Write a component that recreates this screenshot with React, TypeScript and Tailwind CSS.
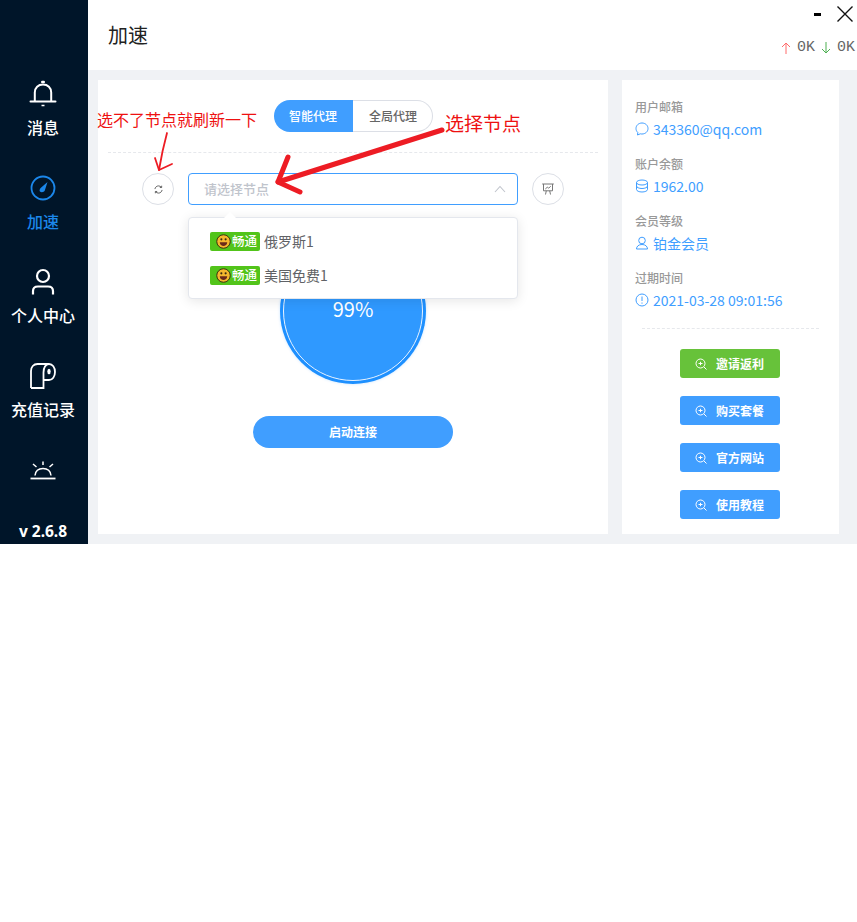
import React from "react";

const FONT = '"Noto Sans CJK SC", "Noto Sans", sans-serif';

const Bell = () => (
  <svg width="28" height="28" viewBox="0 0 28 28" fill="none" stroke="#fff" strokeWidth="2">
    <path d="M5.800 21V12.500c0-4.800 3.400-8 8.200-8s8.200 3.200 8.200 8V21" />
    <path d="M1.500 21.500h25" strokeLinecap="round" />
    <path d="M13.200 2h1.600" strokeWidth="2.400" strokeLinecap="round" />
    <path d="M12.500 25.500h3" strokeWidth="1.500" />
  </svg>
);
const Gauge = () => (
  <svg width="26" height="26" viewBox="0 0 26 26" fill="none">
    <circle cx="13" cy="13" r="11.500" stroke="#1b87ea" strokeWidth="1.800" />
    <path d="M17.500 7 L14.800 15.500 C14 17.300 11 17.800 9.700 16.200 C9.300 14.800 10 13.500 11.200 12.500 Z" fill="#1b87ea" />
  </svg>
);
const Person = () => (
  <svg width="24" height="28" viewBox="0 0 24 28" fill="none" stroke="#fff" strokeWidth="2.200">
    <circle cx="12" cy="8" r="6" />
    <path d="M2 26.500V23c0-3 2-4.500 5-4.500h10c3 0 5 1.500 5 4.500v3.500" />
  </svg>
);
const Roll = () => (
  <svg width="26" height="26" viewBox="0 0 26 26" fill="none" stroke="#fff" strokeWidth="1.800">
    <path d="M1 25V8c0-4 2.500-7 6.500-7H19c3.500 0 6 3.500 6 8s-2.500 8-6 8h-5.500" />
    <path d="M1 25h12.500V9.500C13.500 5 15.500 1 19 1" />
    <ellipse cx="19" cy="8.500" rx="1.700" ry="2.700" fill="#fff" stroke="none" />
  </svg>
);
const Sunrise = () => (
  <svg width="26" height="20" viewBox="0 0 26 20" fill="none" stroke="#fff" strokeWidth="1.500">
    <path d="M.5 18.500h25" strokeWidth="1.800" />
    <path d="M5 15.500C5.500 11 8.500 8.500 13 8.500s7.500 2.500 8 7" />
    <path d="M13 1.500v3.500M3 4l3.500 3M23 4l-3.500 3" />
  </svg>
);

const Refresh = () => (
  <svg width="9" height="9" viewBox="0 0 10 10" fill="none" stroke="#555" strokeWidth="1">
    <path d="M1 4.500C1.300 2.500 3 1 5 1c1.300 0 2.400.6 3.100 1.500M9 5.500C8.700 7.500 7 9 5 9c-1.300 0-2.400-.6-3.100-1.500" />
    <path d="M8.500 .8v2H6.500M1.500 9.200v-2h2" />
  </svg>
);
const Board = () => (
  <svg width="12" height="12" viewBox="0 0 12 12" fill="none" stroke="#777" strokeWidth="1">
    <path d="M.2 1h11.600M1.500 1v6.800h9V1" />
    <path d="M3.300 6l2-1.800 1.400 1 2-2" />
    <path d="M3.500 11.500l.8-3.700M8.500 11.500l-.8-3.700" />
  </svg>
);
const Chevron = () => (
  <svg width="12" height="8" viewBox="0 0 12 8" fill="none" stroke="#c0c4cc" strokeWidth="1.100">
    <path d="M1 7l5-5.500L11 7" />
  </svg>
);
const Smile = () => (
  <svg width="15" height="15" viewBox="0 0 14 14" className="shrink-0">
    <circle cx="7" cy="7" r="6.300" fill="#f5b82e" stroke="#3a2a10" strokeWidth="0.900" />
    <circle cx="5" cy="5" r="1" fill="#3a2a10" />
    <circle cx="9" cy="5" r="1" fill="#3a2a10" />
    <path d="M3.500 7.700h7C10.300 10 8.800 11.300 7 11.300S3.700 10 3.500 7.700z" fill="#6b2a1a" />
  </svg>
);

const Chat = () => (
  <svg width="14" height="14" viewBox="0 0 14 14" fill="none" stroke="#409eff" strokeWidth="1">
    <path d="M7 1c3.300 0 6 2.300 6 5.500S10.300 12 7 12c-.6 0-1.200 0-1.700-.2L2.500 13l.3-2.500C1.600 9.400 1 8 1 6.500 1 3.300 3.700 1 7 1z" />
  </svg>
);
const Coins = () => (
  <svg width="14" height="14" viewBox="0 0 14 14" fill="none" stroke="#409eff" strokeWidth="1">
    <ellipse cx="7" cy="3.500" rx="5.500" ry="2.500" />
    <path d="M1.500 3.500v7c0 1.400 2.500 2.500 5.500 2.500s5.500-1.100 5.500-2.500v-7M1.500 7c0 1.400 2.500 2.500 5.500 2.500s5.500-1.100 5.500-2.500" />
  </svg>
);
const User = () => (
  <svg width="14" height="14" viewBox="0 0 14 14" fill="none" stroke="#409eff" strokeWidth="1">
    <circle cx="7" cy="4.500" r="3.300" />
    <path d="M1.500 13c0-2.700 2.200-4.500 5.500-4.500s5.500 1.800 5.500 4.500z" />
  </svg>
);
const Clock = () => (
  <svg width="14" height="14" viewBox="0 0 14 14" fill="none" stroke="#409eff" strokeWidth="1">
    <circle cx="7" cy="7" r="6" />
    <path d="M7 3.500v4.500M7 9.500v1.200" />
  </svg>
);
const Zoom = () => (
  <svg width="12" height="12" viewBox="0 0 12 12" fill="none" stroke="#fff" strokeWidth="1">
    <circle cx="5.500" cy="5.500" r="4.500" />
    <path d="M9 9l2.500 2.500M3.500 5.500h4M5.500 3.800v3.400" />
  </svg>
);

const NavItem = ({ icon, label, active }: { icon: React.ReactNode; label: string; active?: boolean }) => (
  <div className={`flex h-[94px] flex-col items-center ${active ? "text-[#1b87ea]" : "text-white"}`}>
    <div className="flex h-[28px] items-center justify-center">{icon}</div>
    <div className="mt-[7px] text-[16px] leading-[24px] font-medium">{label}</div>
  </div>
);

const Info = ({ label, icon, value }: { label: string; icon: React.ReactNode; value: string }) => (
  <div className="h-[57px]">
    <div className="text-[12px] leading-[18px] text-[#999] font-medium">{label}</div>
    <div className="mt-[2px] flex h-[22px] items-center gap-[4px] text-[14px] text-[#409eff]">
      {icon}
      <span>{value}</span>
    </div>
  </div>
);

const Action = ({ label, green }: { label: string; green?: boolean }) => (
  <button className={`flex h-[29px] w-[100px] items-center justify-center gap-[9px] rounded-[3px] text-[12px] font-bold text-white ${green ? "bg-[#67c23a]" : "bg-[#409eff]"}`}>
    <Zoom />
    <span>{label}</span>
  </button>
);

const Option = ({ label }: { label: string }) => (
  <div className="flex h-[34px] items-center gap-[4px] pl-[21px] text-[14px] text-[#606266]">
    <span className="flex h-[19px] w-[50px] items-center gap-[1px] rounded-[2px] bg-[#52c41a] pl-[6px] text-[12.500px] font-medium text-white">
      <Smile />
      <span>畅通</span>
    </span>
    <span>{label}</span>
  </div>
);

export default function App() {
  return (
    <div className="relative flex h-[544px] w-[857px] overflow-hidden bg-white" style={{ fontFamily: FONT }}>
      <aside className="flex h-full w-[88px] shrink-0 flex-col bg-[#001529] pt-[80px] pr-[2px]">
        <NavItem icon={<Bell />} label="消息" />
        <NavItem icon={<Gauge />} label="加速" active />
        <NavItem icon={<Person />} label="个人中心" />
        <NavItem icon={<Roll />} label="充值记录" />
        <div className="flex h-[28px] items-center justify-center"><Sunrise /></div>
        <div className="mt-auto mb-[1px] text-center text-[15.500px] leading-[24px] font-bold text-white" style={{ fontFamily: '"Noto Sans", sans-serif' }}>v 2.6.8</div>
      </aside>

      <main className="flex min-w-0 flex-1 flex-col">
        <header className="relative flex h-[70px] shrink-0 items-center pl-[20px] text-[20px] text-[#222]">
          <span>加速</span>
          <div className="absolute top-[5px] right-[3px] flex items-center gap-[15px]">
            <span className="h-[3px] w-[7px] bg-black" />
            <svg width="18" height="18" viewBox="0 0 18 18" fill="none" stroke="#111" strokeWidth="1.400">
              <path d="M1.500 1.500l15 15M16.500 1.500l-15 15" />
            </svg>
          </div>
          <div className="absolute top-[39px] right-[2px] flex items-center gap-[6px] text-[15px] leading-[18px] text-[#666]" style={{ fontFamily: '"Liberation Mono", monospace' }}>
            <svg width="10" height="12" viewBox="0 0 10 12" fill="none" stroke="#ff6b6b" strokeWidth="1"><path d="M5 12V1M1 5l4-4 4 4" /></svg>
            <span>0K</span>
            <svg width="10" height="12" viewBox="0 0 10 12" fill="none" stroke="#4caf50" strokeWidth="1"><path d="M5 0v11M1 7l4 4 4-4" /></svg>
            <span>0K</span>
          </div>
        </header>

        <div className="flex min-h-0 flex-1 gap-[14px] bg-[#f0f2f5] py-[10px] pl-[10px] pr-[18px]">
          <section className="relative flex w-[510px] flex-col items-center bg-white pt-[20px]">
            <div className="flex h-[32px] text-[12px] font-medium">
              <div className="flex w-[79px] items-center justify-center rounded-l-[16px] bg-[#409eff] text-white">智能代理</div>
              <div className="flex w-[80px] items-center justify-center rounded-r-[16px] border border-l-0 border-[#dcdfe6] pl-[2px] text-[#666]">全局代理</div>
            </div>
            <div className="mt-[20px] w-[490px] border-t border-dashed border-[#e6e8ec]" />
            <div className="mt-[20px] flex items-center gap-[14px]">
              <div className="flex h-[32px] w-[32px] items-center justify-center rounded-full border border-[#dcdfe6]"><Refresh /></div>
              <div className="flex h-[32px] w-[330px] items-center justify-between rounded-[4px] border border-[#409eff] pl-[15px] pr-[11px] text-[13px] font-medium text-[#c0c4cc]">
                <span>请选择节点</span>
                <Chevron />
              </div>
              <div className="flex h-[32px] w-[32px] items-center justify-center rounded-full border border-[#dcdfe6]"><Board /></div>
            </div>

            <div className="mt-[33px] flex h-[146px] w-[146px] items-center justify-center rounded-full bg-[#1e90ff] shadow-[0_0_3px_rgba(30,144,255,0.25)]">
              <div className="flex h-[140px] w-[140px] items-center justify-center rounded-full border-[1.500px] border-[#e8f3ff] bg-[#2f99ff] text-[20px] leading-none text-white">
                <span className="relative -top-[2px]">99%</span>
              </div>
            </div>

            <button className="mt-[32px] h-[32px] w-[200px] rounded-[16px] bg-[#409eff] text-[12px] font-bold text-white">启动连接</button>

            {/* dropdown */}
            <div className="absolute top-[137px] left-[90px] w-[330px] rounded-[4px] border border-[#e4e7ed] bg-white py-[6px] shadow-[0_2px_12px_rgba(0,0,0,0.1)]">
              <span className="absolute -top-[6px] left-[35px] h-0 w-0 border-x-[6px] border-b-[6px] border-x-transparent border-b-white" />
              <Option label="俄罗斯1" />
              <Option label="美国免费1" />
            </div>

            {/* red annotations */}
            <div className="absolute top-[28px] -left-[1px] whitespace-nowrap text-[16px] leading-[22px] text-[#ee1111]">选不了节点就刷新一下</div>
            <div className="absolute top-[30px] left-[347px] whitespace-nowrap text-[19px] leading-[26px] text-[#ee1111]">选择节点</div>
            <svg className="pointer-events-none absolute top-[40px] left-0 overflow-visible" width="510" height="80" viewBox="0 0 510 80" fill="none" stroke="#ed1c24" strokeLinecap="round" strokeLinejoin="round">
              <path d="M344 10 L180 62" strokeWidth="5" />
              <path d="M190 37 L180 62 L202 72" strokeWidth="5" />
              <path d="M69 13 C66 24 63 38 61 50" strokeWidth="1.800" />
              <path d="M57 38 L61 50 L74 44" strokeWidth="1.800" />
            </svg>
          </section>

          <section className="flex w-[217px] flex-col bg-white pt-[18px]">
            <div className="pl-[13px]">
              <Info label="用户邮箱" icon={<Chat />} value="343360@qq.com" />
              <Info label="账户余额" icon={<Coins />} value="1962.00" />
              <Info label="会员等级" icon={<User />} value="铂金会员" />
              <Info label="过期时间" icon={<Clock />} value="2021-03-28 09:01:56" />
            </div>
            <div className="mx-[20px] mt-[2px] border-t border-dashed border-[#e6e8ec]" />
            <div className="mt-[20px] flex flex-col items-center gap-[18px] pr-[2px]">
              <Action label="邀请返利" green />
              <Action label="购买套餐" />
              <Action label="官方网站" />
              <Action label="使用教程" />
            </div>
          </section>
        </div>
      </main>
    </div>
  );
}
